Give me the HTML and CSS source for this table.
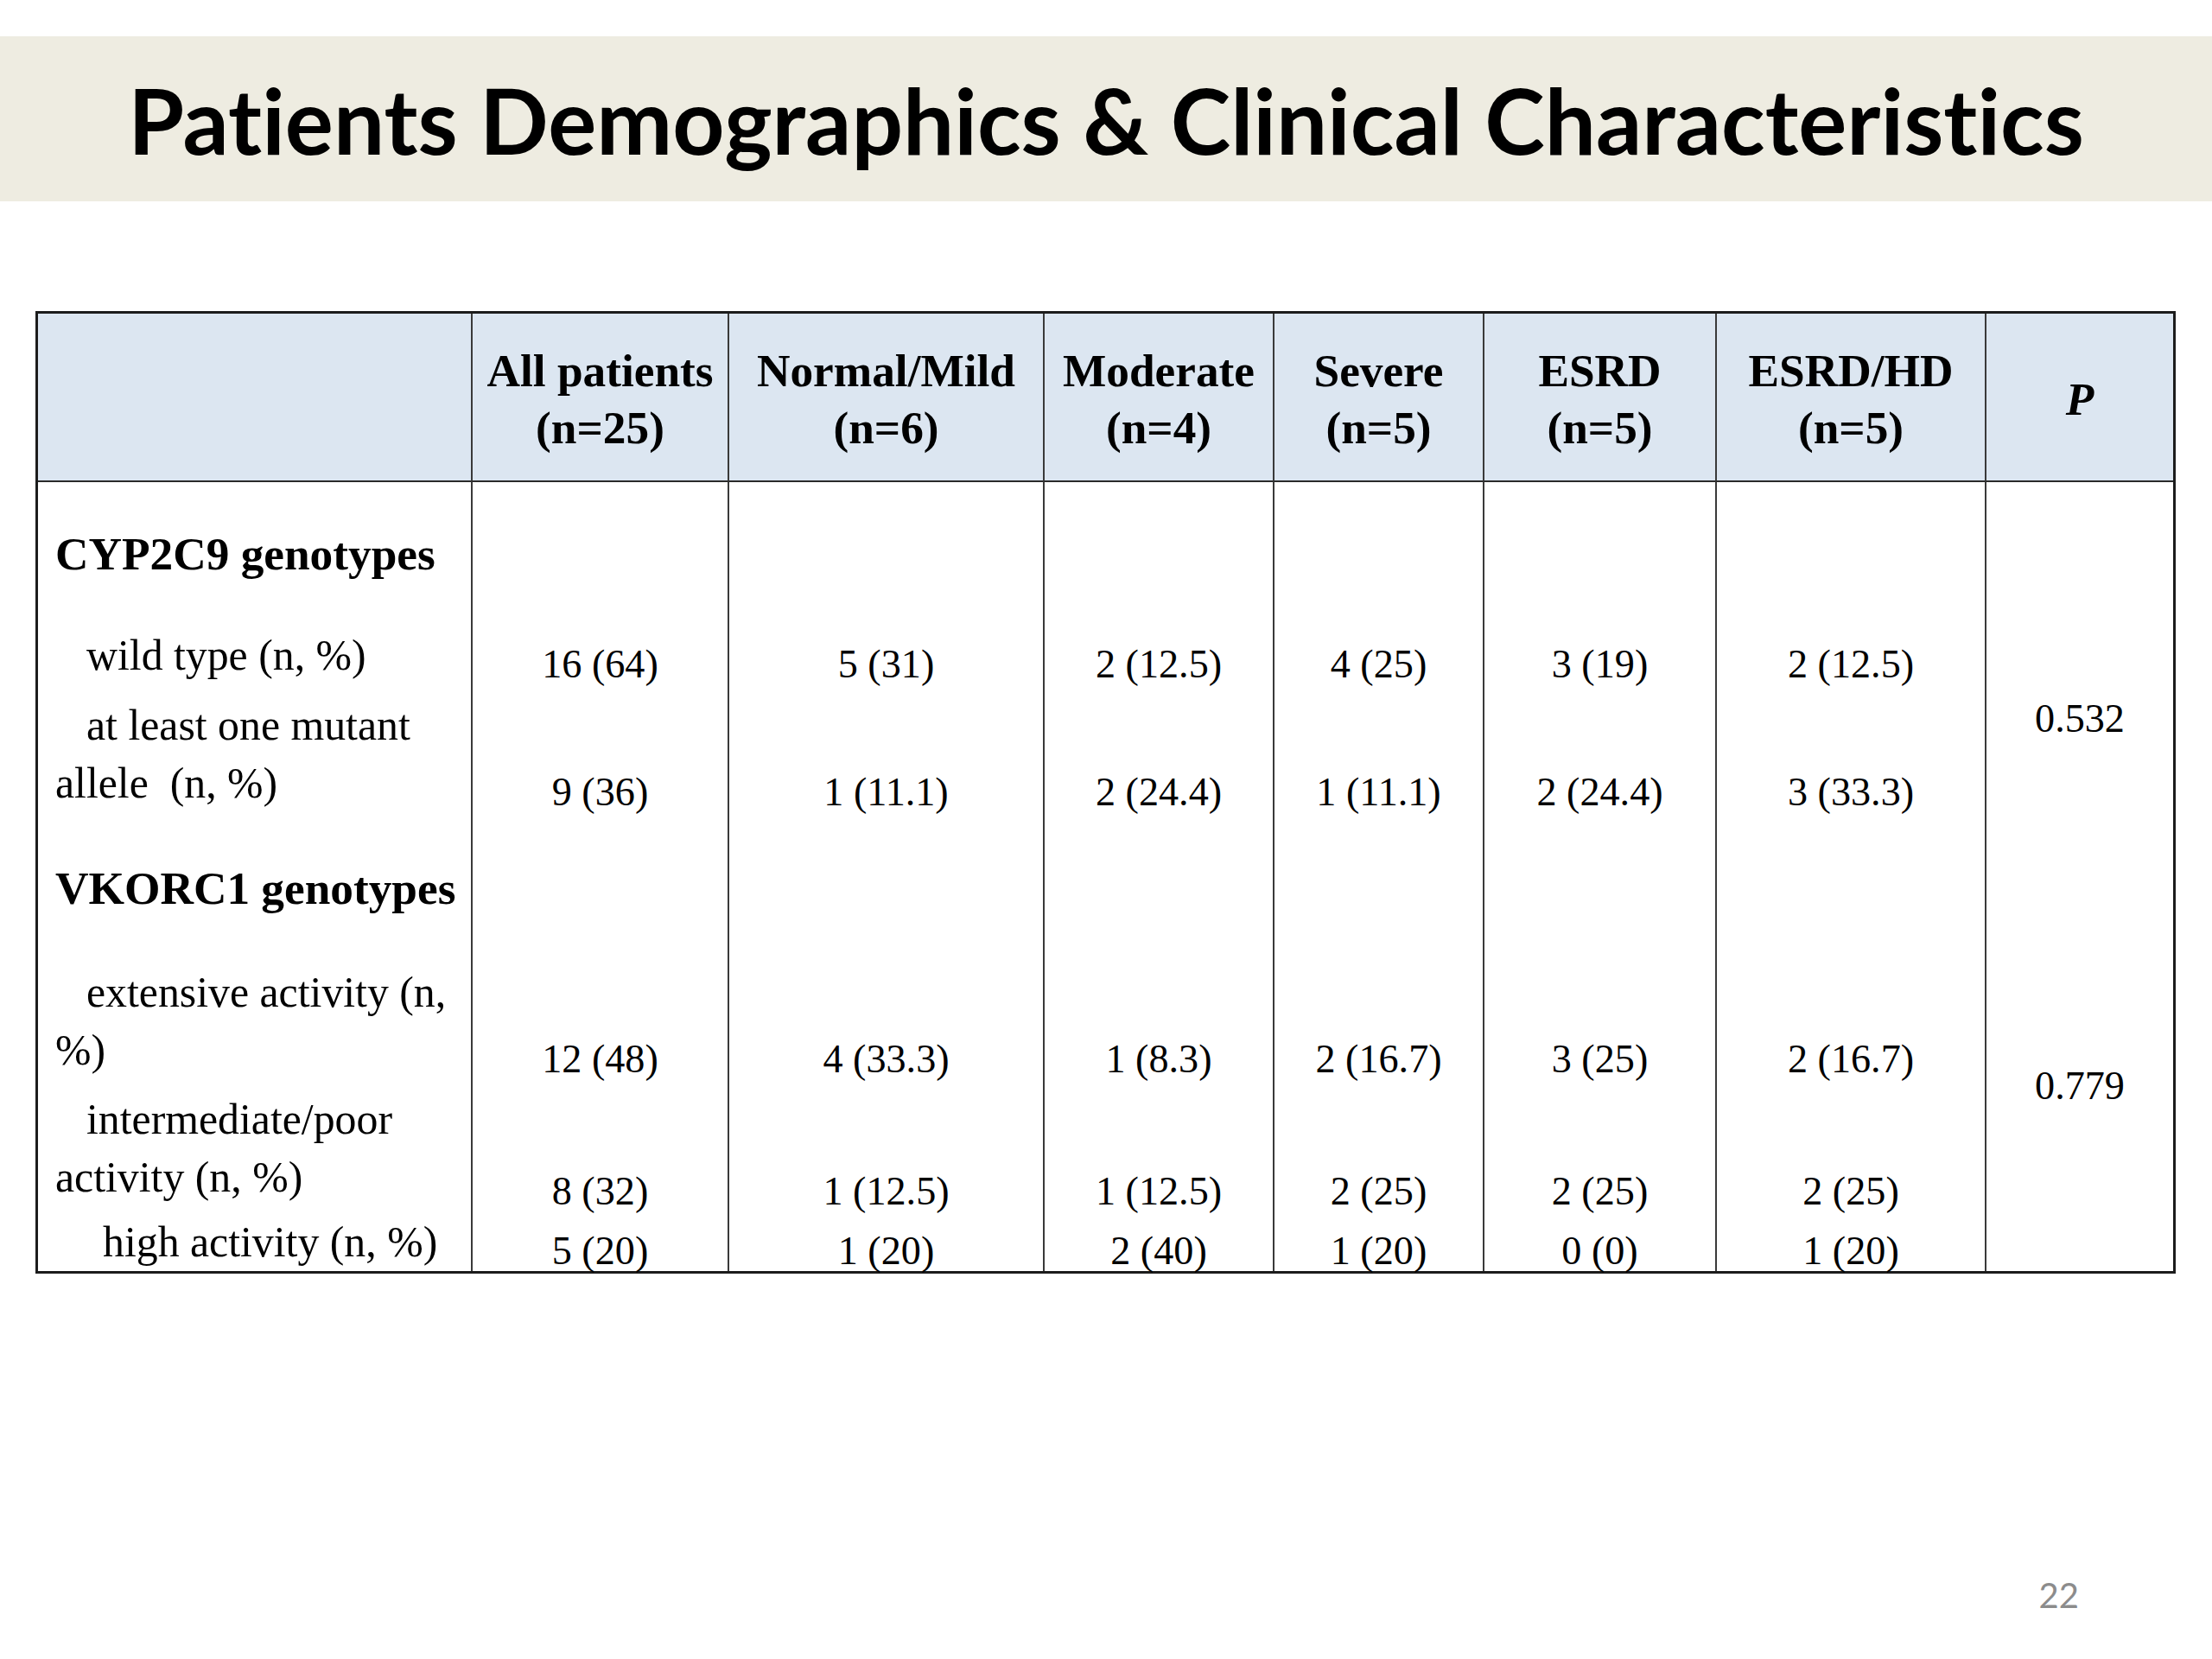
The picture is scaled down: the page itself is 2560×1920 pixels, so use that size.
FILE: index.html
```html
<!DOCTYPE html>
<html lang="en">
<head>
<meta charset="utf-8">
<title>Patients Demographics &amp; Clinical Characteristics</title>
<link rel="stylesheet" href="styles.css">
</head>
<body>
<div class="slide">
  <header class="title-band">
    <h1 class="title">Patients Demographics &amp; Clinical Characteristics</h1>
  </header>

  <table class="data">
    <colgroup>
      <col class="c1"><col class="c2"><col class="c3"><col class="c4"><col class="c5"><col class="c6"><col class="c7"><col class="c8">
    </colgroup>
    <thead>
      <tr class="r-head">
        <th class="first"></th>
        <th>All patients<br>(n=25)</th>
        <th>Normal/Mild<br>(n=6)</th>
        <th>Moderate<br>(n=4)</th>
        <th>Severe<br>(n=5)</th>
        <th>ESRD<br>(n=5)</th>
        <th>ESRD/HD<br>(n=5)</th>
        <th><i>P</i></th>
      </tr>
    </thead>
    <tbody>
      <tr class="r-g1">
        <td class="first group">CYP2C9 genotypes</td>
        <td></td><td></td><td></td><td></td><td></td><td></td><td></td>
      </tr>
      <tr class="r-2">
        <td class="first label">wild type (n, %)</td>
        <td class="val">16 (64)</td>
        <td class="val">5 (31)</td>
        <td class="val">2 (12.5)</td>
        <td class="val">4 (25)</td>
        <td class="val">3 (19)</td>
        <td class="val">2 (12.5)</td>
        <td class="pval" rowspan="2">0.532</td>
      </tr>
      <tr class="r-3">
        <td class="first label">at least one mutant allele&nbsp; (n, %)</td>
        <td class="val">9 (36)</td>
        <td class="val">1 (11.1)</td>
        <td class="val">2 (24.4)</td>
        <td class="val">1 (11.1)</td>
        <td class="val">2 (24.4)</td>
        <td class="val">3 (33.3)</td>
      </tr>
      <tr class="r-g2">
        <td class="first group group-bottom">VKORC1 genotypes</td>
        <td></td><td></td><td></td><td></td><td></td><td></td><td></td>
      </tr>
      <tr class="r-5">
        <td class="first label">extensive activity (n, %)</td>
        <td class="val">12 (48)</td>
        <td class="val">4 (33.3)</td>
        <td class="val">1 (8.3)</td>
        <td class="val">2 (16.7)</td>
        <td class="val">3 (25)</td>
        <td class="val">2 (16.7)</td>
        <td class="pval pval-raised" rowspan="3">0.779</td>
      </tr>
      <tr class="r-6">
        <td class="first label label-lift">intermediate/poor activity (n, %)</td>
        <td class="val">8 (32)</td>
        <td class="val">1 (12.5)</td>
        <td class="val">1 (12.5)</td>
        <td class="val">2 (25)</td>
        <td class="val">2 (25)</td>
        <td class="val">2 (25)</td>
      </tr>
      <tr class="r-7">
        <td class="first label label-deep">high activity (n, %)</td>
        <td class="val">5 (20)</td>
        <td class="val">1 (20)</td>
        <td class="val">2 (40)</td>
        <td class="val">1 (20)</td>
        <td class="val">0 (0)</td>
        <td class="val">1 (20)</td>
      </tr>
    </tbody>
  </table>

  <footer class="footer">
    <span class="page-num">22</span>
  </footer>
</div>
</body>
</html>
```

FILE: styles.css
```css
* {
  box-sizing: border-box;
}

html, body {
  margin: 0;
  padding: 0;
  background: #ffffff;
}

.slide {
  width: 2560px;
  height: 1920px;
  display: flex;
  flex-direction: column;
  background: #ffffff;
}

/* ---------- title ---------- */
.title-band {
  margin-top: 42px;
  height: 191px;
  background: #eeece1;
  display: flex;
  align-items: center;
  justify-content: center;
}

.title {
  margin: 0;
  font-family: Lato, "Open Sans", "Liberation Sans", sans-serif;
  font-weight: 700;
  font-size: 105px;
  line-height: 1.2;
  color: #000000;
  white-space: nowrap;
  font-variant-ligatures: none;
  font-feature-settings: "liga" 0, "clig" 0;
}

/* ---------- table ---------- */
.data {
  margin: 127px 0 0 41px;
  width: 2477px;
  table-layout: fixed;
  border-collapse: separate;
  border-spacing: 0;
  border: 3px solid #1c1c1c;
  font-family: "Liberation Serif", "Times New Roman", serif;
  color: #000000;
}

.c1 { width: 501px; }
.c2 { width: 297px; }
.c3 { width: 365px; }
.c4 { width: 266px; }
.c5 { width: 243px; }
.c6 { width: 269px; }
.c7 { width: 312px; }
.c8 { width: 218px; }

.data th,
.data td {
  padding: 0;
  border-left: 2px solid #3a3a3a;
}

.data th.first,
.data td.first {
  border-left: none;
}

.data th {
  background: #dce6f1;
  font-weight: 700;
  font-size: 53.3px;
  line-height: 66px;
  text-align: center;
  vertical-align: middle;
  padding: 6px 2px 0;
  border-bottom: 2px solid #2a2a2a;
  white-space: nowrap;
}

.r-head { height: 195px; }
.r-g1 { height: 166px; }
.r-2 { height: 68px; }
.r-3 { height: 148px; }
.r-g2 { height: 122px; }
.r-5 { height: 187px; }
.r-6 { height: 153px; }
.r-7 { height: 69px; }

.group {
  font-weight: 700;
  font-size: 53.3px;
  line-height: 67px;
  padding-left: 20px !important;
  vertical-align: middle;
  white-space: nowrap;
}

.group-bottom {
  vertical-align: bottom;
}

.label {
  font-size: 49.8px;
  line-height: 67px;
  padding-left: 20px !important;
  text-indent: 36px;
  vertical-align: bottom;
}

.label-deep {
  text-indent: 55px;
}

.label-lift {
  padding-bottom: 6px !important;
}

.val,
.pval {
  font-size: 46.2px;
  line-height: 46px;
  text-align: center;
  white-space: nowrap;
}

.val {
  vertical-align: bottom;
}

.pval {
  vertical-align: middle;
}

.pval-raised {
  padding-bottom: 20px !important;
}

/* ---------- footer ---------- */
.footer {
  margin-top: auto;
  display: flex;
  justify-content: flex-end;
  padding: 0 154px 52px 0;
}

.page-num {
  font-family: Lato, "Open Sans", "Liberation Sans", sans-serif;
  font-size: 40px;
  line-height: 43px;
  color: #8c8c8c;
}
```
